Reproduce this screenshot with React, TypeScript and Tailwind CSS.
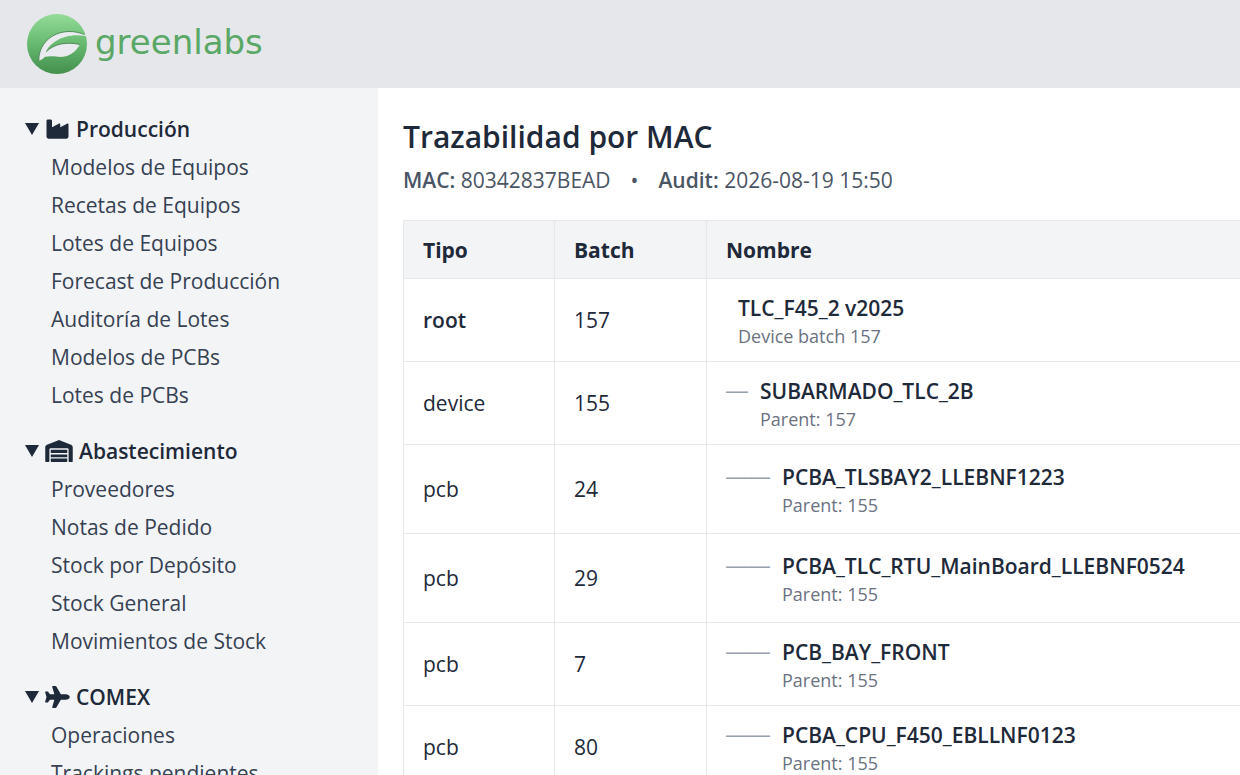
import { useState } from "react";
import type { IconType } from "react-icons";
import { FaIndustry, FaPlane, FaWarehouse } from "react-icons/fa6";

type Section = { title: string; icon: IconType; iconClass: string; items: string[] };

const SECTIONS: Section[] = [
  {
    title: "Producción",
    icon: FaIndustry,
    iconClass: "w-[25px]",
    items: [
      "Modelos de Equipos",
      "Recetas de Equipos",
      "Lotes de Equipos",
      "Forecast de Producción",
      "Auditoría de Lotes",
      "Modelos de PCBs",
      "Lotes de PCBs",
    ],
  },
  {
    title: "Abastecimiento",
    icon: FaWarehouse,
    iconClass: "w-7",
    items: ["Proveedores", "Notas de Pedido", "Stock por Depósito", "Stock General", "Movimientos de Stock"],
  },
  { title: "COMEX", icon: FaPlane, iconClass: "w-[25px]", items: ["Operaciones", "Trackings pendientes"] },
];

type Row = { tipo: string; batch: number; nombre: string; detalle: string; nivel: number; tall?: boolean };

const ROWS: Row[] = [
  { tipo: "root", batch: 157, nombre: "TLC_F45_2 v2025", detalle: "Device batch 157", nivel: 0 },
  { tipo: "device", batch: 155, nombre: "SUBARMADO_TLC_2B", detalle: "Parent: 157", nivel: 1 },
  { tipo: "pcb", batch: 24, nombre: "PCBA_TLSBAY2_LLEBNF1223", detalle: "Parent: 155", nivel: 2, tall: true },
  { tipo: "pcb", batch: 29, nombre: "PCBA_TLC_RTU_MainBoard_LLEBNF0524", detalle: "Parent: 155", nivel: 2, tall: true },
  { tipo: "pcb", batch: 7, nombre: "PCB_BAY_FRONT", detalle: "Parent: 155", nivel: 2 },
  { tipo: "pcb", batch: 80, nombre: "PCBA_CPU_F450_EBLLNF0123", detalle: "Parent: 155", nivel: 2 },
];

function Logo() {
  return (
    <a href="#" className="flex items-center gap-[7px] text-[#5aa866]">
      <svg viewBox="0 0 62 62" className="size-[62px]" aria-hidden="true">
        <defs>
          <linearGradient id="leaf" x1="0" y1="0" x2="0" y2="1">
            <stop offset="0" stopColor="#93dc98" />
            <stop offset="0.5" stopColor="#67b96f" />
            <stop offset="1" stopColor="#438f4d" />
          </linearGradient>
        </defs>
        <circle cx="31" cy="31" r="30" fill="url(#leaf)" />
        {/* upper blade */}
        <path
          d="M13 48C12 37 20 20 42 18.500C49 18.200 54 20 60 21.500L60 23C47 21 38 23.500 31 27.500C25 31 21 35 20 39.500L18 45Z"
          fill="#e9ebee"
        />
        {/* lower blade */}
        <path d="M13 48L20.500 38.500C28 31 40 28.500 54 31.500C50 38 46 41 42 42.500C34 46 28 41.500 18 44Z" fill="#e9ebee" />
        <path
          d="M13 48C12 37 20 20 42 18.500C49 18.200 54 20 58.500 21.500M20.500 38.500C28 31 40 28.500 54 31.500"
          fill="none"
          stroke="#3d7a47"
          strokeWidth="0.8"
        />
      </svg>
      <span className="pb-1 font-['DejaVu_Sans',sans-serif] text-[34px] leading-10">greenlabs</span>
    </a>
  );
}

function NavSection({ title, icon: Icon, iconClass, items }: Section) {
  const [open, setOpen] = useState(true);

  return (
    <div className="mb-[18px]">
      <button
        className="flex h-[38px] w-full items-center font-semibold text-gray-800"
        aria-expanded={open}
        onClick={() => setOpen(!open)}
      >
        <svg viewBox="0 0 14 12" className={`mr-[6px] h-3 w-[14px] ${open ? "" : "-rotate-90"}`} aria-hidden="true">
          <path d="M0 0H14L7 12Z" fill="currentColor" />
        </svg>
        <Icon className={`mr-[6px] h-[22px] ${iconClass}`} />
        <span className="leading-8">{title}</span>
      </button>
      {open && (
        <ul className="pl-[26px] text-gray-700">
          {items.map((item) => (
            <li key={item}>
              <a href="#" className="block h-[38px] leading-[38px] hover:text-gray-900">
                {item}
              </a>
            </li>
          ))}
        </ul>
      )}
    </div>
  );
}

export default function App() {
  return (
    <div className="flex h-screen flex-col overflow-hidden bg-white font-['Open_Sans',sans-serif] text-[21px] text-gray-800">
      <header className="flex h-[88px] shrink-0 items-center bg-gray-200 px-[26px]">
        <Logo />
      </header>

      <div className="flex min-h-0 flex-1">
        <nav className="w-[378px] shrink-0 overflow-hidden bg-gray-100 px-[25px] pt-[22px]">
          {SECTIONS.map((s) => (
            <NavSection key={s.title} {...s} />
          ))}
        </nav>

        <main className="min-w-0 flex-1 overflow-hidden pt-7 pl-[25px]">
          <h1 className="text-[30px] leading-[42px] font-semibold">Trazabilidad por MAC</h1>
          <p className="mt-2 leading-7 text-gray-600">
            <b className="font-semibold">MAC:</b> 80342837BEAD
            <span className="mx-5">•</span>
            <b className="font-semibold">Audit:</b> 2026-08-19 15:50
          </p>

          <table className="mt-[26px] w-[1100px] table-fixed border-collapse leading-8">
            <thead className="bg-gray-100">
              <tr className="h-[58px] text-left">
                <th className="w-[151px] border border-gray-200 px-[19px] font-bold">Tipo</th>
                <th className="w-[152px] border border-gray-200 px-[19px] font-bold">Batch</th>
                <th className="border border-gray-200 px-[19px] font-bold">Nombre</th>
              </tr>
            </thead>
            <tbody>
              {ROWS.map((r) => (
                <tr key={r.batch} className={r.tall ? "h-[89px]" : "h-[83px]"}>
                  <td className={`border border-gray-200 px-[19px] ${r.nivel === 0 ? "font-semibold" : ""}`}>{r.tipo}</td>
                  <td className="border border-gray-200 px-[19px]">{r.batch}</td>
                  <td className="border border-gray-200 px-[19px]">
                    <div className="flex gap-3 pt-[3px] leading-7">
                      <span className="font-['Liberation_Sans',sans-serif] text-[22px] leading-7 text-gray-400">
                        {"—".repeat(r.nivel)}
                      </span>
                      <div>
                        <div className="font-semibold">{r.nombre}</div>
                        <div className="text-lg leading-7 text-gray-500">{r.detalle}</div>
                      </div>
                    </div>
                  </td>
                </tr>
              ))}
            </tbody>
          </table>
        </main>
      </div>
    </div>
  );
}
